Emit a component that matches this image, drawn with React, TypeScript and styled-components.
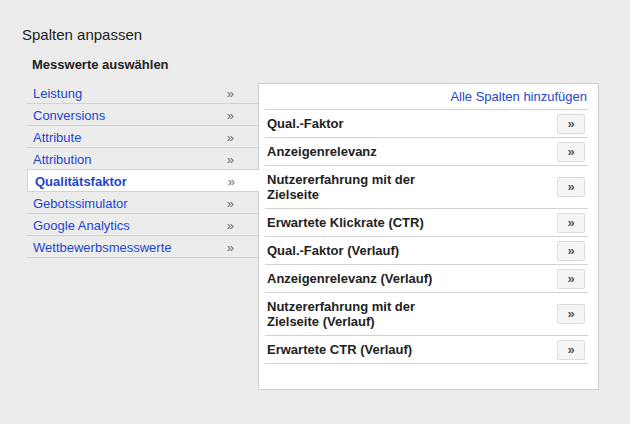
import styled, { createGlobalStyle } from "styled-components";

const GlobalStyle = createGlobalStyle`
	body {
		margin: 0;
		background: #ececec;
		font-family: "Liberation Sans", Arial, sans-serif;
		color: #222;
	}
`;

const Page = styled.div`
	padding: 26px 22px;
`;

const Title = styled.h1`
	margin: 0 0 13px;
	font-size: 15px;
	line-height: 18px;
	font-weight: normal;
`;

const Section = styled.div`
	padding-left: 5px;
`;

const Heading = styled.h2`
	margin: 0 0 9px;
	padding-left: 5px;
	font-size: 13px;
	line-height: 16px;
	font-weight: bold;
`;

const Body = styled.div`
	display: flex;
	align-items: flex-start;
`;

const Categories = styled.ul`
	width: 231px;
	margin: 0;
	padding: 0;
	list-style: none;
`;

const Category = styled.li<{ $active?: boolean }>`
	display: flex;
	justify-content: space-between;
	align-items: center;
	height: 19px;
	padding: 2px 24px 0 ${(p) => (p.$active ? "7px" : "6px")};
	line-height: 19px;
	font-size: 13px;
	color: #1d46cc;
	font-weight: ${(p) => (p.$active ? "bold" : "normal")};
	border-bottom: 1px solid #d2d2d2;
	border-left: ${(p) => (p.$active ? "1px solid #d2d2d2" : "none")};
	background: ${(p) => (p.$active ? "#fff" : "transparent")};
	margin-right: ${(p) => (p.$active ? "-1px" : "0")};
	position: relative;
	z-index: ${(p) => (p.$active ? 1 : 0)};
	cursor: pointer;
`;

const Arrow = styled.span`
	font-size: 13px;
	font-weight: normal;
	color: #6e6e6e;
`;

const Panel = styled.div`
	width: 323px;
	margin-top: 1px;
	padding: 0 10px 25px 6px;
	background: #fff;
	border: 1px solid #cfcfcf;
`;

const PanelHeader = styled.div`
	height: 25px;
	line-height: 25px;
	text-align: right;
	padding-right: 1px;
	font-size: 13px;
	border-bottom: 1px solid #d2d2d2;
`;

const AddAll = styled.a`
	color: #1d46cc;
	text-decoration: none;
	cursor: pointer;
`;

const Row = styled.div`
	display: flex;
	justify-content: space-between;
	align-items: center;
	padding: 0 3px 0 2px;
	border-bottom: 1px solid #d2d2d2;
`;

const Label = styled.span`
	max-width: 190px;
	padding: 6px 0;
	font-size: 13px;
	line-height: 15px;
	font-weight: bold;
	color: #222;
`;

const AddButton = styled.button`
	width: 28px;
	height: 20px;
	padding: 0;
	background: #f5f5f5;
	border: 1px solid #dcdcdc;
	border-radius: 2px;
	font-family: "Liberation Sans", Arial, sans-serif;
	font-size: 13px;
	font-weight: bold;
	line-height: 16px;
	color: #555;
	cursor: pointer;
`;

const categories = [
	"Leistung",
	"Conversions",
	"Attribute",
	"Attribution",
	"Qualitätsfaktor",
	"Gebotssimulator",
	"Google Analytics",
	"Wettbewerbsmesswerte",
];

const metrics = [
	"Qual.-Faktor",
	"Anzeigenrelevanz",
	"Nutzererfahrung mit der Zielseite",
	"Erwartete Klickrate (CTR)",
	"Qual.-Faktor (Verlauf)",
	"Anzeigenrelevanz (Verlauf)",
	"Nutzererfahrung mit der Zielseite (Verlauf)",
	"Erwartete CTR (Verlauf)",
];

function App() {
	const selected = "Qualitätsfaktor";

	return (
		<>
			<GlobalStyle />
			<Page>
				<Title>Spalten anpassen</Title>
				<Section>
					<Heading>Messwerte auswählen</Heading>
					<Body>
						<Categories>
							{categories.map((c) => (
								<Category key={c} $active={c === selected}>
									<span>{c}</span>
									<Arrow>»</Arrow>
								</Category>
							))}
						</Categories>
						<Panel>
							<PanelHeader>
								<AddAll>Alle Spalten hinzufügen</AddAll>
							</PanelHeader>
							{metrics.map((m) => (
								<Row key={m}>
									<Label>{m}</Label>
									<AddButton>»</AddButton>
								</Row>
							))}
						</Panel>
					</Body>
				</Section>
			</Page>
		</>
	);
}

export default App;
